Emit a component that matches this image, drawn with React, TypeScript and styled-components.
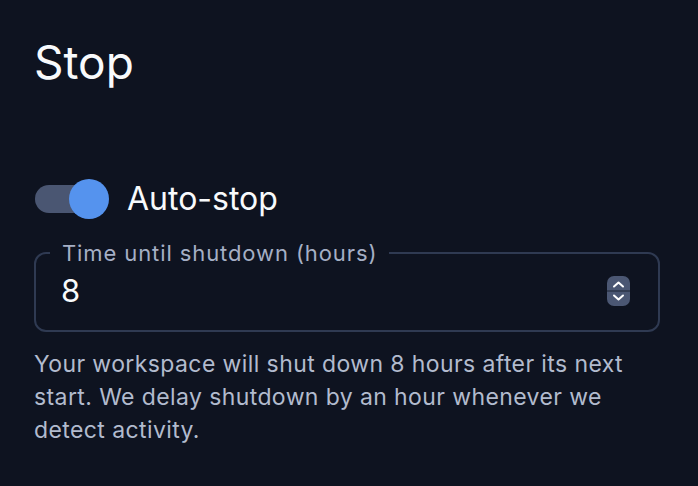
import styled, { createGlobalStyle } from "styled-components";

const GlobalStyle = createGlobalStyle`
    html, body {
        margin: 0;
        padding: 0;
        background: #0e1320;
    }
    body {
        font-family: Inter, "Noto Sans", sans-serif;
        color: #f1f5f9;
    }
`;

const Page = styled.div`
    min-height: 486px;
    box-sizing: border-box;
    padding: 35px 38px 0 34px;
    display: flex;
    flex-direction: column;
`;

const Title = styled.h2`
    margin: 0;
    font-size: 46px;
    font-weight: 400;
    line-height: 1.2;
    color: #f8fafc;
`;

const SwitchRow = styled.label`
    display: flex;
    align-items: center;
    gap: 19px;
    margin-top: 89px;
    cursor: pointer;
`;

const Track = styled.span<{ $on: boolean }>`
    position: relative;
    display: inline-block;
    width: 74px;
    height: 40px;
    &::before {
        content: "";
        position: absolute;
        left: 1px;
        top: 6px;
        width: 65px;
        height: 28px;
        border-radius: 14px;
        background: ${(p) => (p.$on ? "#4a5672" : "#334155")};
    }
`;

const Thumb = styled.span<{ $on: boolean }>`
    position: absolute;
    top: 0;
    left: ${(p) => (p.$on ? "35px" : "0")};
    width: 40px;
    height: 40px;
    border-radius: 50%;
    background: ${(p) => (p.$on ? "#5593ee" : "#cbd5e1")};
`;

const SwitchLabel = styled.span`
    font-size: 32px;
    line-height: 1.2;
    color: #f8fafc;
`;

const Field = styled.fieldset`
    margin: 23px 0 0;
    padding: 8px 28px 20px 25px;
    border: 2px solid #2f3a52;
    border-radius: 12px;
    display: flex;
    align-items: center;
    justify-content: space-between;
`;

const Legend = styled.legend`
    margin-left: -11px;
    padding: 0 12px;
    font-size: 22px;
    letter-spacing: 0.9px;
    line-height: 1;
    color: #a5afc5;
`;

const Value = styled.span`
    font-size: 31px;
    line-height: 1.21;
    color: #f8fafc;
`;

const Spinner = styled.svg`
    display: block;
    width: 23px;
    height: 30px;
`;

const Helper = styled.p`
    margin: 16px 0 0;
    font-size: 23px;
    letter-spacing: 0.4px;
    line-height: 33px;
    color: #b2bbce;
`;

export default function App() {
    const on = true;
    const hours = 8;

    return (
        <>
            <GlobalStyle />
            <Page>
                <Title>Stop</Title>

                <SwitchRow>
                    <Track $on={on}>
                        <Thumb $on={on} />
                    </Track>
                    <SwitchLabel>Auto-stop</SwitchLabel>
                </SwitchRow>

                <Field>
                    <Legend>Time until shutdown (hours)</Legend>
                    <Value>{hours}</Value>
                    <Spinner viewBox="0 0 23 30">
                        <rect x="0" y="0" width="23" height="30" rx="7" fill="#4b5773" />
                        <line x1="0" y1="15" x2="23" y2="15" stroke="#2b3448" strokeWidth="1.5" />
                        <path d="M7 10.5 L11.5 6.5 L16 10.5" fill="none" stroke="#ffffff" strokeWidth="2" strokeLinecap="round" strokeLinejoin="round" />
                        <path d="M7 19.5 L11.5 23.5 L16 19.5" fill="none" stroke="#ffffff" strokeWidth="2" strokeLinecap="round" strokeLinejoin="round" />
                    </Spinner>
                </Field>

                <Helper>
                    Your workspace will shut down {hours} hours after its next start. We delay shutdown by an hour whenever we detect activity.
                </Helper>
            </Page>
        </>
    );
}
